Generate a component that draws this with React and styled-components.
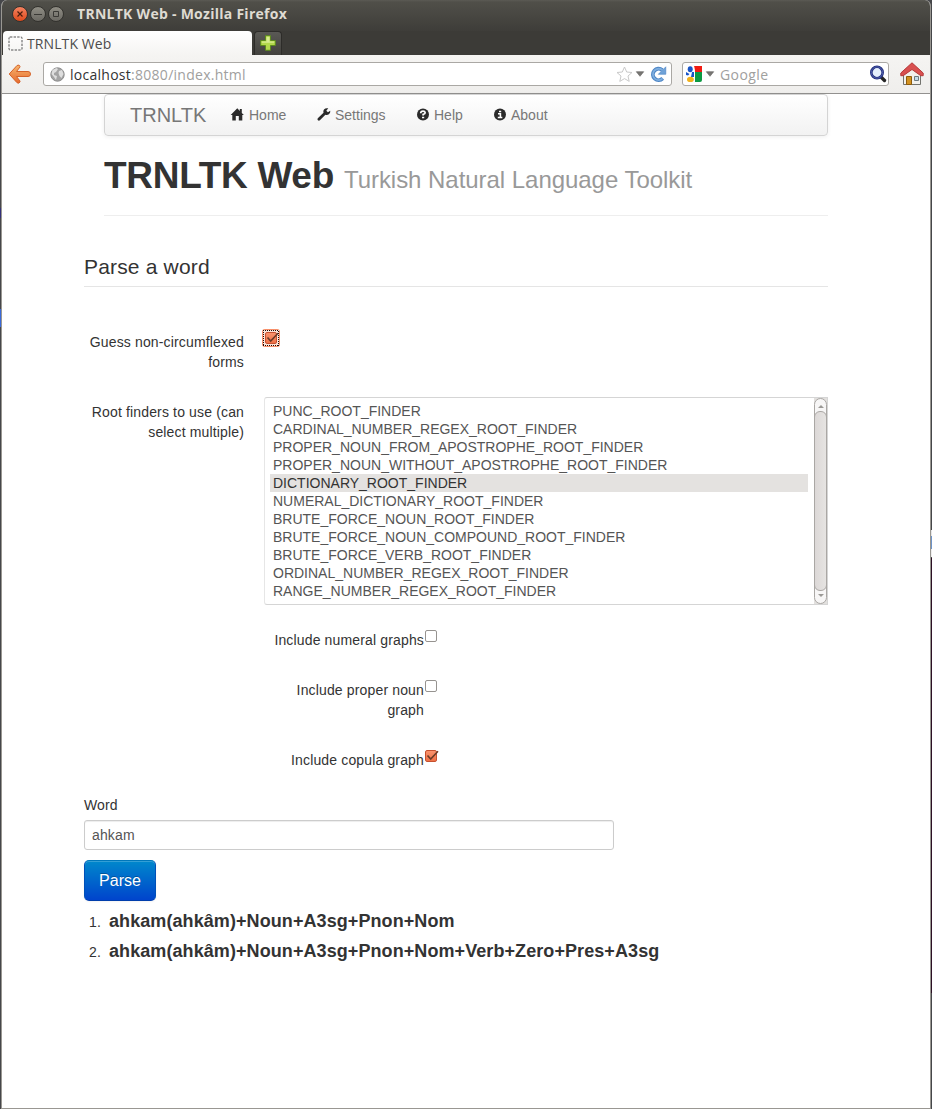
import React from "react";
import styled, { createGlobalStyle } from "styled-components";

const Global = createGlobalStyle`
  * { box-sizing: border-box; }
  html, body { margin: 0; padding: 0; }
  body { background: #3c3b37; overflow: hidden; }
`;

const Desktop = styled.div`
  width: 932px;
  height: 1109px;
  padding: 0 1px 0 1px;
  background:
    linear-gradient(#3a69d8, #3a69d8) 0 309px / 1px 18px no-repeat,
    linear-gradient(#33307a, #33307a) 0 208px / 1px 10px no-repeat,
    linear-gradient(#e8e8e8, #e8e8e8) 931px 530px / 1px 6px no-repeat,
    linear-gradient(#6d93c8, #6d93c8) 931px 536px / 1px 13px no-repeat,
    linear-gradient(#eeeeee, #eeeeee) 931px 549px / 1px 8px no-repeat,
    linear-gradient(#2c1025, #2c1025) 931px 558px / 1px 435px no-repeat,
    #46474a;
`;
const Win = styled.div`
  height: 1109px;
  display: flex;
  flex-direction: column;
  border-radius: 6px 6px 0 0;
  border: solid #999792;
  border-width: 0 1px 1px;
  background: #fff;
  overflow: hidden;
  font-family: "Liberation Sans", Arial, sans-serif;
`;
const TitleBar = styled.div`
  height: 31px;
  flex: none;
  display: flex;
  align-items: center;
  padding: 0 0 3px 10px;
  gap: 2px;
  background: linear-gradient(#5b5a54 0, #504f49 2px, #3e3d39 100%);
`;
const Round = styled.span`
  width: 16px;
  height: 16px;
  border-radius: 50%;
  border: 1px solid #33322e;
  background: ${(p) => (p.$hot ? "linear-gradient(#f58260, #df4a1c)" : "linear-gradient(#8f8d84, #6b6963)")};
  display: flex;
  align-items: center;
  justify-content: center;
`;
const Title = styled.span`
  font: bold 14px/20px "Open Sans", "Noto Sans", sans-serif;
  letter-spacing: 0.27px;
  color: #dfdbd2;
  margin-left: 11px;
  white-space: nowrap;
`;
const TabStrip = styled.div`
  height: 24px;
  flex: none;
  display: flex;
  gap: 2px;
  padding-left: 1px;
  background: #3c3b37;
`;
const Tab = styled.div`
  width: 249px;
  border-radius: 4px 4px 0 0;
  background: linear-gradient(#fff, #f5f4f2);
  display: flex;
  align-items: center;
  padding-left: 5px;
  gap: 4px;
`;
const TabText = styled.span`
  font: 14px/20px "Open Sans", "Noto Sans", sans-serif;
  letter-spacing: 0.1px;
  padding-top: 2px;
  color: #4c4c4c;
`;
const NewTab = styled.div`
  width: 28px;
  border-radius: 4px 4px 0 0;
  border: 1px solid #2d2c29;
  border-bottom: 0;
  background: linear-gradient(#5a5955, #42413d);
  display: flex;
  justify-content: center;
  padding: 3px 1px 0 0;
`;
const ToolBar = styled.div`
  height: 39px;
  flex: none;
  display: flex;
  align-items: center;
  padding-left: 6px;
  background: linear-gradient(#f5f4f2, #efeeec);
  border-bottom: 1px solid #92918f;
`;
const Field = styled.div`
  width: ${(p) => p.$w}px;
  height: 24px;
  margin-left: ${(p) => p.$ml}px;
  border: 1px solid #aaa8a4;
  border-radius: 3px;
  background: #fff;
  display: flex;
  align-items: center;
  padding: ${(p) => p.$pad};
`;
const FieldText = styled.span`
  flex: 1;
  font: 14px/20px "Open Sans", "Noto Sans", sans-serif;
  letter-spacing: ${(p) => p.$track}px;
  color: #a0a09e;
  margin-left: ${(p) => p.$ml}px;
  padding-top: 1px;
  white-space: nowrap;
`;
const Host = styled.span`color: #333;`;
const Icon = styled.svg`
  display: block;
  flex: none;
  margin-left: ${(p) => p.$ml || 0}px;
  overflow: visible;
`;
const Page = styled.main`
  flex: 1;
  padding: 0 102px 0 82px;
  font-size: 14px;
  line-height: 20px;
  color: #333;
`;
const NavBar = styled.nav`
  height: 42px;
  margin-left: 20px;
  border: 1px solid #d4d4d4;
  border-radius: 4px;
  background: linear-gradient(#fff, #f2f2f2);
  box-shadow: 0 1px 4px rgba(0, 0, 0, 0.065);
  display: flex;
  align-items: center;
  padding-left: 25px;
  color: #777;
`;
const Brand = styled.span`
  font-size: 20px;
  width: 86px;
`;
const NavItem = styled.a`
  display: flex;
  align-items: center;
  gap: 4px;
  padding: 0 15px 0 15px;
  width: ${(p) => p.$w}px;
  white-space: nowrap;
`;
const PageHeader = styled.header`
  margin: 19px 0 0 20px;
  height: 61px;
  border-bottom: 1px solid #eee;
`;
const Heading = styled.h1`
  margin: 0;
  font-size: 37px;
  line-height: 41px;
  letter-spacing: -0.3px;
  white-space: nowrap;
`;
const Sub = styled.small`
  font-size: 24px;
  font-weight: normal;
  color: #999;
  letter-spacing: -0.04px;
`;
const Legend = styled.h2`
  margin: 31px 0 0;
  height: 40px;
  line-height: 40px;
  font-size: 21px;
  font-weight: normal;
  letter-spacing: 0.17px;
  border-bottom: 1px solid #e5e5e5;
`;
const Row = styled.div`
  display: flex;
  align-items: flex-start;
  margin-top: ${(p) => p.$mt}px;
  padding-left: ${(p) => p.$indent || 0}px;
`;
const Label = styled.label`
  width: 160px;
  text-align: right;
  padding-top: ${(p) => (p.$flush ? 0 : 5)}px;
  letter-spacing: 0.15px;
`;
const Check = styled.span`
  width: 12px;
  height: 12px;
  margin: 0 0 0 1px;
  border: 1px solid ${(p) => (p.$on ? "#c6502e" : "#969390")};
  border-radius: 2px;
  background: ${(p) => (p.$on ? "linear-gradient(#f9936d, #ee7147)" : "#fff")};
`;
const FocusCheck = styled.span`
  width: 18px;
  height: 18px;
  margin: 2px 0 0 18px;
  border-radius: 3px;
  background: #f8906a;
  padding: 1px;
`;
const Dotted = styled.span`
  display: flex;
  position: relative;
  width: 16px;
  height: 16px;
  padding: 2px;
  background: #fbe3d8;
  ${Check} { margin: 0; }
`;
const DotLine = styled.svg`
  position: absolute;
  left: 0;
  top: 0;
`;
const ListBox = styled.div`
  width: 564px;
  height: 208px;
  margin-left: 20px;
  border: 1px solid #d5d5d5;
  border-left-color: #e6e6e6;
  border-radius: 3px 0 0 3px;
  display: flex;
  color: #555;
`;
const Options = styled.ul`
  list-style: none;
  margin: 0;
  padding: 4px 6px 4px 5px;
  flex: 1;
`;
const Option = styled.li`
  height: 18px;
  line-height: 18px;
  padding-left: 3px;
  white-space: nowrap;
  color: ${(p) => (p.$on ? "#333" : "#555")};
  background: ${(p) => (p.$on ? "#e4e2e0" : "none")};
`;
const ScrollBar = styled.div`
  width: 13px;
  height: 206px;
  background: #e2e0de;
`;
const Track = styled.div`
  width: 13px;
  height: 206px;
  border: 1px solid #aaa7a4;
  border-radius: 7px;
  background: #f7f6f6;
  display: flex;
  flex-direction: column;
  align-items: center;
  justify-content: space-between;
`;
const Thumb = styled.div`
  width: 13px;
  height: 180px;
  border: 1px solid #aaa7a4;
  border-radius: 6px;
  background: linear-gradient(90deg, #dcd8d7, #e6e4e2);
`;
const Arrow = styled.span`
  border: 3px solid transparent;
  border-width: ${(p) => (p.$up ? "0 3px 3px" : "3px 3px 0")};
  border-top-color: ${(p) => (p.$up ? "transparent" : "#9b9996")};
  border-bottom-color: ${(p) => (p.$up ? "#9b9996" : "transparent")};
  margin: ${(p) => (p.$up ? "6px 0 0" : "0 0 6px")};
`;
const WordLabel = styled.label`
  display: block;
  margin-top: 25px;
  letter-spacing: 0.15px;
`;
const WordInput = styled.div`
  width: 530px;
  height: 30px;
  margin-top: 5px;
  padding: 4px 7px;
  border: 1px solid #ccc;
  border-radius: 3px;
  box-shadow: inset 0 1px 1px rgba(0, 0, 0, 0.075);
  color: #555;
  letter-spacing: 0.15px;
`;
const Parse = styled.button`
  display: block;
  width: 72px;
  height: 41px;
  margin: 10px 0 0;
  padding: 0;
  border: 1px solid #0057b8;
  border-color: #0077bb #0050b8 #003dac;
  border-radius: 5px;
  background: linear-gradient(#0088cc, #0044cc);
  box-shadow: inset 0 1px 0 rgba(255, 255, 255, 0.2), 0 1px 2px rgba(0, 0, 0, 0.05);
  color: #fff;
  font: 16px/20px "Liberation Sans", Arial, sans-serif;
  text-shadow: 0 -1px 0 rgba(0, 0, 0, 0.25);
`;
const Results = styled.ol`
  list-style: none;
  margin: 5px 0 0;
  padding: 0;
`;
const Result = styled.li`
  display: flex;
  height: 30px;
  line-height: 30px;
  white-space: nowrap;
`;
const Num = styled.span`
  width: 25px;
  padding: 1px 0 0 5px;
  letter-spacing: 0.2px;
`;
const Parsed = styled.strong`
  font-size: 18px;
  letter-spacing: 0.08px;
`;

const OPTIONS = [
  "PUNC_ROOT_FINDER",
  "CARDINAL_NUMBER_REGEX_ROOT_FINDER",
  "PROPER_NOUN_FROM_APOSTROPHE_ROOT_FINDER",
  "PROPER_NOUN_WITHOUT_APOSTROPHE_ROOT_FINDER",
  "DICTIONARY_ROOT_FINDER",
  "NUMERAL_DICTIONARY_ROOT_FINDER",
  "BRUTE_FORCE_NOUN_ROOT_FINDER",
  "BRUTE_FORCE_NOUN_COMPOUND_ROOT_FINDER",
  "BRUTE_FORCE_VERB_ROOT_FINDER",
  "ORDINAL_NUMBER_REGEX_ROOT_FINDER",
  "RANGE_NUMBER_REGEX_ROOT_FINDER",
];

const Tick = () => (
  <Icon width="12" height="11" viewBox="0 0 12 11">
    <path d="M1.500 4.500L4.700 8L12 .3" fill="none" stroke="#6b3a26" strokeWidth="1.600" />
  </Icon>
);

const DropArrow = ({ ml }) => (
  <Icon $ml={ml} width="8" height="6" viewBox="0 0 8 6">
    <path d="M.3.7h7.4L4 5.3z" fill="#777673" stroke="#5f5e5c" strokeWidth=".6" />
  </Icon>
);

export default function App() {
  return (
    <>
      <Global />
      <Desktop>
        <Win>
          <TitleBar>
            <Round $hot>
              <Icon width="6" height="6" viewBox="0 0 6 6"><path d="M.5.5l5 5M5.5.5l-5 5" stroke="#4a1d0d" strokeWidth="1.2" /></Icon>
            </Round>
            <Round>
              <Icon width="8" height="6" viewBox="0 0 8 6"><path d="M0 3.5h8" stroke="#3a3935" /></Icon>
            </Round>
            <Round>
              <Icon width="6" height="6" viewBox="0 0 6 6"><path d="M.5.5h5v5h-5z" fill="none" stroke="#3a3935" /></Icon>
            </Round>
            <Title>TRNLTK Web - Mozilla Firefox</Title>
          </TitleBar>
          <TabStrip>
            <Tab>
              <Icon width="15" height="15" viewBox="0 0 15 15">
                <rect x="1" y="1" width="13" height="13" rx="1" fill="none" stroke="#555" strokeDasharray="2.4 1.2" />
              </Icon>
              <TabText>TRNLTK Web</TabText>
            </Tab>
            <NewTab>
              <Icon width="16" height="16" viewBox="0 0 16 16">
                <path d="M5.5.7h5v4.8h4.8v5h-4.8v4.8h-5v-4.8H.7v-5h4.8z" fill="#b4d94c" stroke="#5c8a1d" />
                <path d="M6.5 1.8h3v4.7h4.7v1.2H1.8V6.5h4.7z" fill="#d8ec91" />
              </Icon>
            </NewTab>
          </TabStrip>
          <ToolBar>
            <Icon width="24" height="20" viewBox="0 0 24 20">
              <defs>
                <linearGradient id="back" x2="0" y2="1"><stop stopColor="#f7b66e" /><stop offset="1" stopColor="#e66a2e" /></linearGradient>
              </defs>
              <path d="M1.2 10L9 1.5q2.4-1.4 3 1V3L8.5 7.5H20q2.5 0 2.5 2.5T20 12.5H8.5L12 17v1q-.8 2-3 .7z" fill="url(#back)" stroke="#d5632a" />
            </Icon>
            <Field $w={629} $ml={11} $pad="0 4px 0 6px">
              <Icon width="15" height="15" viewBox="0 0 15 15">
                <circle cx="7.5" cy="7.5" r="6.7" fill="#a4a4a4" stroke="#8d8d8d" />
                <path d="M2.5 3l4-2 1.5 1-2 3-2 1v2l3 1-1 4-2-3-2.5-3zM9 4l3-1 1.5 4-2 4-2-2-1-3z" fill="#dedede" />
              </Icon>
              <FieldText $ml={5} $track={0.27}><Host>localhost</Host>:8080/index.html</FieldText>
              <Icon width="17" height="17" viewBox="0 0 17 17">
                <path d="M8.5 1l2.2 5 5.3.5-4 3.5 1.2 5.4-4.7-2.8-4.7 2.8L5 10 1 6.5 6.3 6z" fill="#fff" stroke="#c9c9c9" />
              </Icon>
              <DropArrow ml={3} />
              <Icon $ml={6} width="17" height="17" viewBox="0 0 17 17">
                <path d="M12.7 12.4A5.7 5.7 0 1 1 12.2 4" fill="none" stroke="#4a83c4" strokeWidth="3.8" />
                <path d="M12.7 12.4A5.7 5.7 0 1 1 12.2 4" fill="none" stroke="#7eaedf" strokeWidth="1.8" />
                <path d="M15.8.8v7.5H8.3z" fill="#6fa2d8" stroke="#4a83c4" strokeWidth=".6" />
              </Icon>
            </Field>
            <Field $w={207} $ml={10} $pad="0 1px 0 3px">
              <Icon width="16" height="16" viewBox="0 0 16 16">
                <path d="M8 0h8v6H9z" fill="#f11b12" />
                <path d="M9 6h7v8q0 2-2 2H8z" fill="#0c9a43" />
                <path d="M0 0h8l1 6v10H0z" fill="#fff" />
                <ellipse cx="4.2" cy="3.3" rx="2.5" ry="3" fill="#1854c7" />
                <path d="M0 6l3.5 2L2 9.5 0 9zM6 6h2v5H5z" fill="#1854c7" />
                <ellipse cx="4.4" cy="13.4" rx="3.4" ry="2.6" fill="#f3b21b" />
              </Icon>
              <DropArrow ml={4} />
              <FieldText $ml={6} $track={0.4}>Google</FieldText>
              <Icon width="18" height="18" viewBox="0 0 18 18">
                <path d="M11.5 11.5l4 4" stroke="#252525" strokeWidth="3.4" strokeLinecap="round" />
                <circle cx="8" cy="7.5" r="5.7" fill="#e4eefc" stroke="#22307e" strokeWidth="2.6" />
                <circle cx="8" cy="7.5" r="5.7" fill="none" stroke="#5967b4" strokeWidth=".8" />
              </Icon>
            </Field>
            <Icon $ml={11} width="24" height="24" viewBox="0 0 24 24">
              <path d="M3.5 11L12 4l8.500 7v11.500h-17z" fill="#f2f1ed" stroke="#73736e" />
              <path d="M12 .8L.8 11v2.700h2.400L12 7.500l8.800 6.200h2.400V11z" fill="#d95050" stroke="#b53a3a" />
              <path d="M6.500 14.500h5v8h-5z" fill="#d39220" stroke="#8e5c0c" />
              <path d="M14.500 14.500h4v4h-4z" fill="#c4dcea" stroke="#6c7b83" />
            </Icon>
          </ToolBar>
          <Page>
            <NavBar>
              <Brand>TRNLTK</Brand>
              <NavItem $w={86}>
                <Icon width="14" height="14" viewBox="0.7 0.5 14 14"><path d="M7 .8L.4 7.500H2V13h3.500V8.500h3V13H12V7.500h1.600L11.500 5.400V1.600h-2v1.800z" fill="#2b2b2b" /></Icon>
                Home
              </NavItem>
              <NavItem $w={99}>
                <Icon width="14" height="14" viewBox="0 0.5 14 14"><path d="M13.300 3.200L10.900 4.700 9.300 3.200 11.300.8Q8.500.2 7 2 5.900 3.500 6.500 5.300L.8 10.700q-.8 1 .1 2 1 .9 2 0l5.500-5.400q2 .6 3.500-.6 1.600-1.400 1.400-3.500z" fill="#2b2b2b" /></Icon>
                Settings
              </NavItem>
              <NavItem $w={77}>
                <Icon width="14" height="14" viewBox="0 0 14 14"><circle cx="7" cy="6.500" r="6" fill="#2b2b2b" /><path d="M4.800 5.300V4.500Q5 3.200 7 3.200t2.200 1.600Q9.200 6 7.100 6.400V7.600M6 9.500h2.200" fill="none" stroke="#fff" strokeWidth="1.700" /></Icon>
                Help
              </NavItem>
              <NavItem $w={90}>
                <Icon width="14" height="14" viewBox="0 0 14 14"><circle cx="7" cy="6.500" r="6" fill="#2b2b2b" /><path d="M6 3.500h2.200M5 5.700h2.400v4M4.800 9.500h4.500" fill="none" stroke="#fff" strokeWidth="1.600" /></Icon>
                About
              </NavItem>
            </NavBar>
            <PageHeader>
              <Heading>TRNLTK Web <Sub>Turkish Natural Language Toolkit</Sub></Heading>
            </PageHeader>
            <Legend>Parse a word</Legend>
            <Row $mt={40}>
              <Label>Guess non-circumflexed forms</Label>
              <FocusCheck>
                <Dotted>
                  <DotLine width="16" height="16" viewBox="0 0 16 16" shapeRendering="crispEdges">
                    <path d="M0 .5h16M15.500 1v15M15 15.500H0M.5 15V1" fill="none" stroke="#210b04" strokeDasharray="1 1" />
                  </DotLine>
                  <Check $on><Tick /></Check>
                </Dotted>
              </FocusCheck>
            </Row>
            <Row $mt={25}>
              <Label>Root finders to use (can select multiple)</Label>
              <ListBox>
                <Options>
                  {OPTIONS.map((name) => (
                    <Option key={name} $on={name === "DICTIONARY_ROOT_FINDER"}>{name}</Option>
                  ))}
                </Options>
                <ScrollBar><Track><Arrow $up /><Thumb /><Arrow /></Track></ScrollBar>
              </ListBox>
            </Row>
            <Row $mt={25} $indent={180}><Label $flush>Include numeral graphs</Label><Check /></Row>
            <Row $mt={30} $indent={180}><Label $flush>Include proper noun graph</Label><Check /></Row>
            <Row $mt={30} $indent={180}><Label $flush>Include copula graph</Label><Check $on><Tick /></Check></Row>
            <WordLabel>Word</WordLabel>
            <WordInput>ahkam</WordInput>
            <Parse>Parse</Parse>
            <Results>
              <Result><Num>1.</Num><Parsed>ahkam(ahkâm)+Noun+A3sg+Pnon+Nom</Parsed></Result>
              <Result><Num>2.</Num><Parsed>ahkam(ahkâm)+Noun+A3sg+Pnon+Nom+Verb+Zero+Pres+A3sg</Parsed></Result>
            </Results>
          </Page>
        </Win>
      </Desktop>
    </>
  );
}
